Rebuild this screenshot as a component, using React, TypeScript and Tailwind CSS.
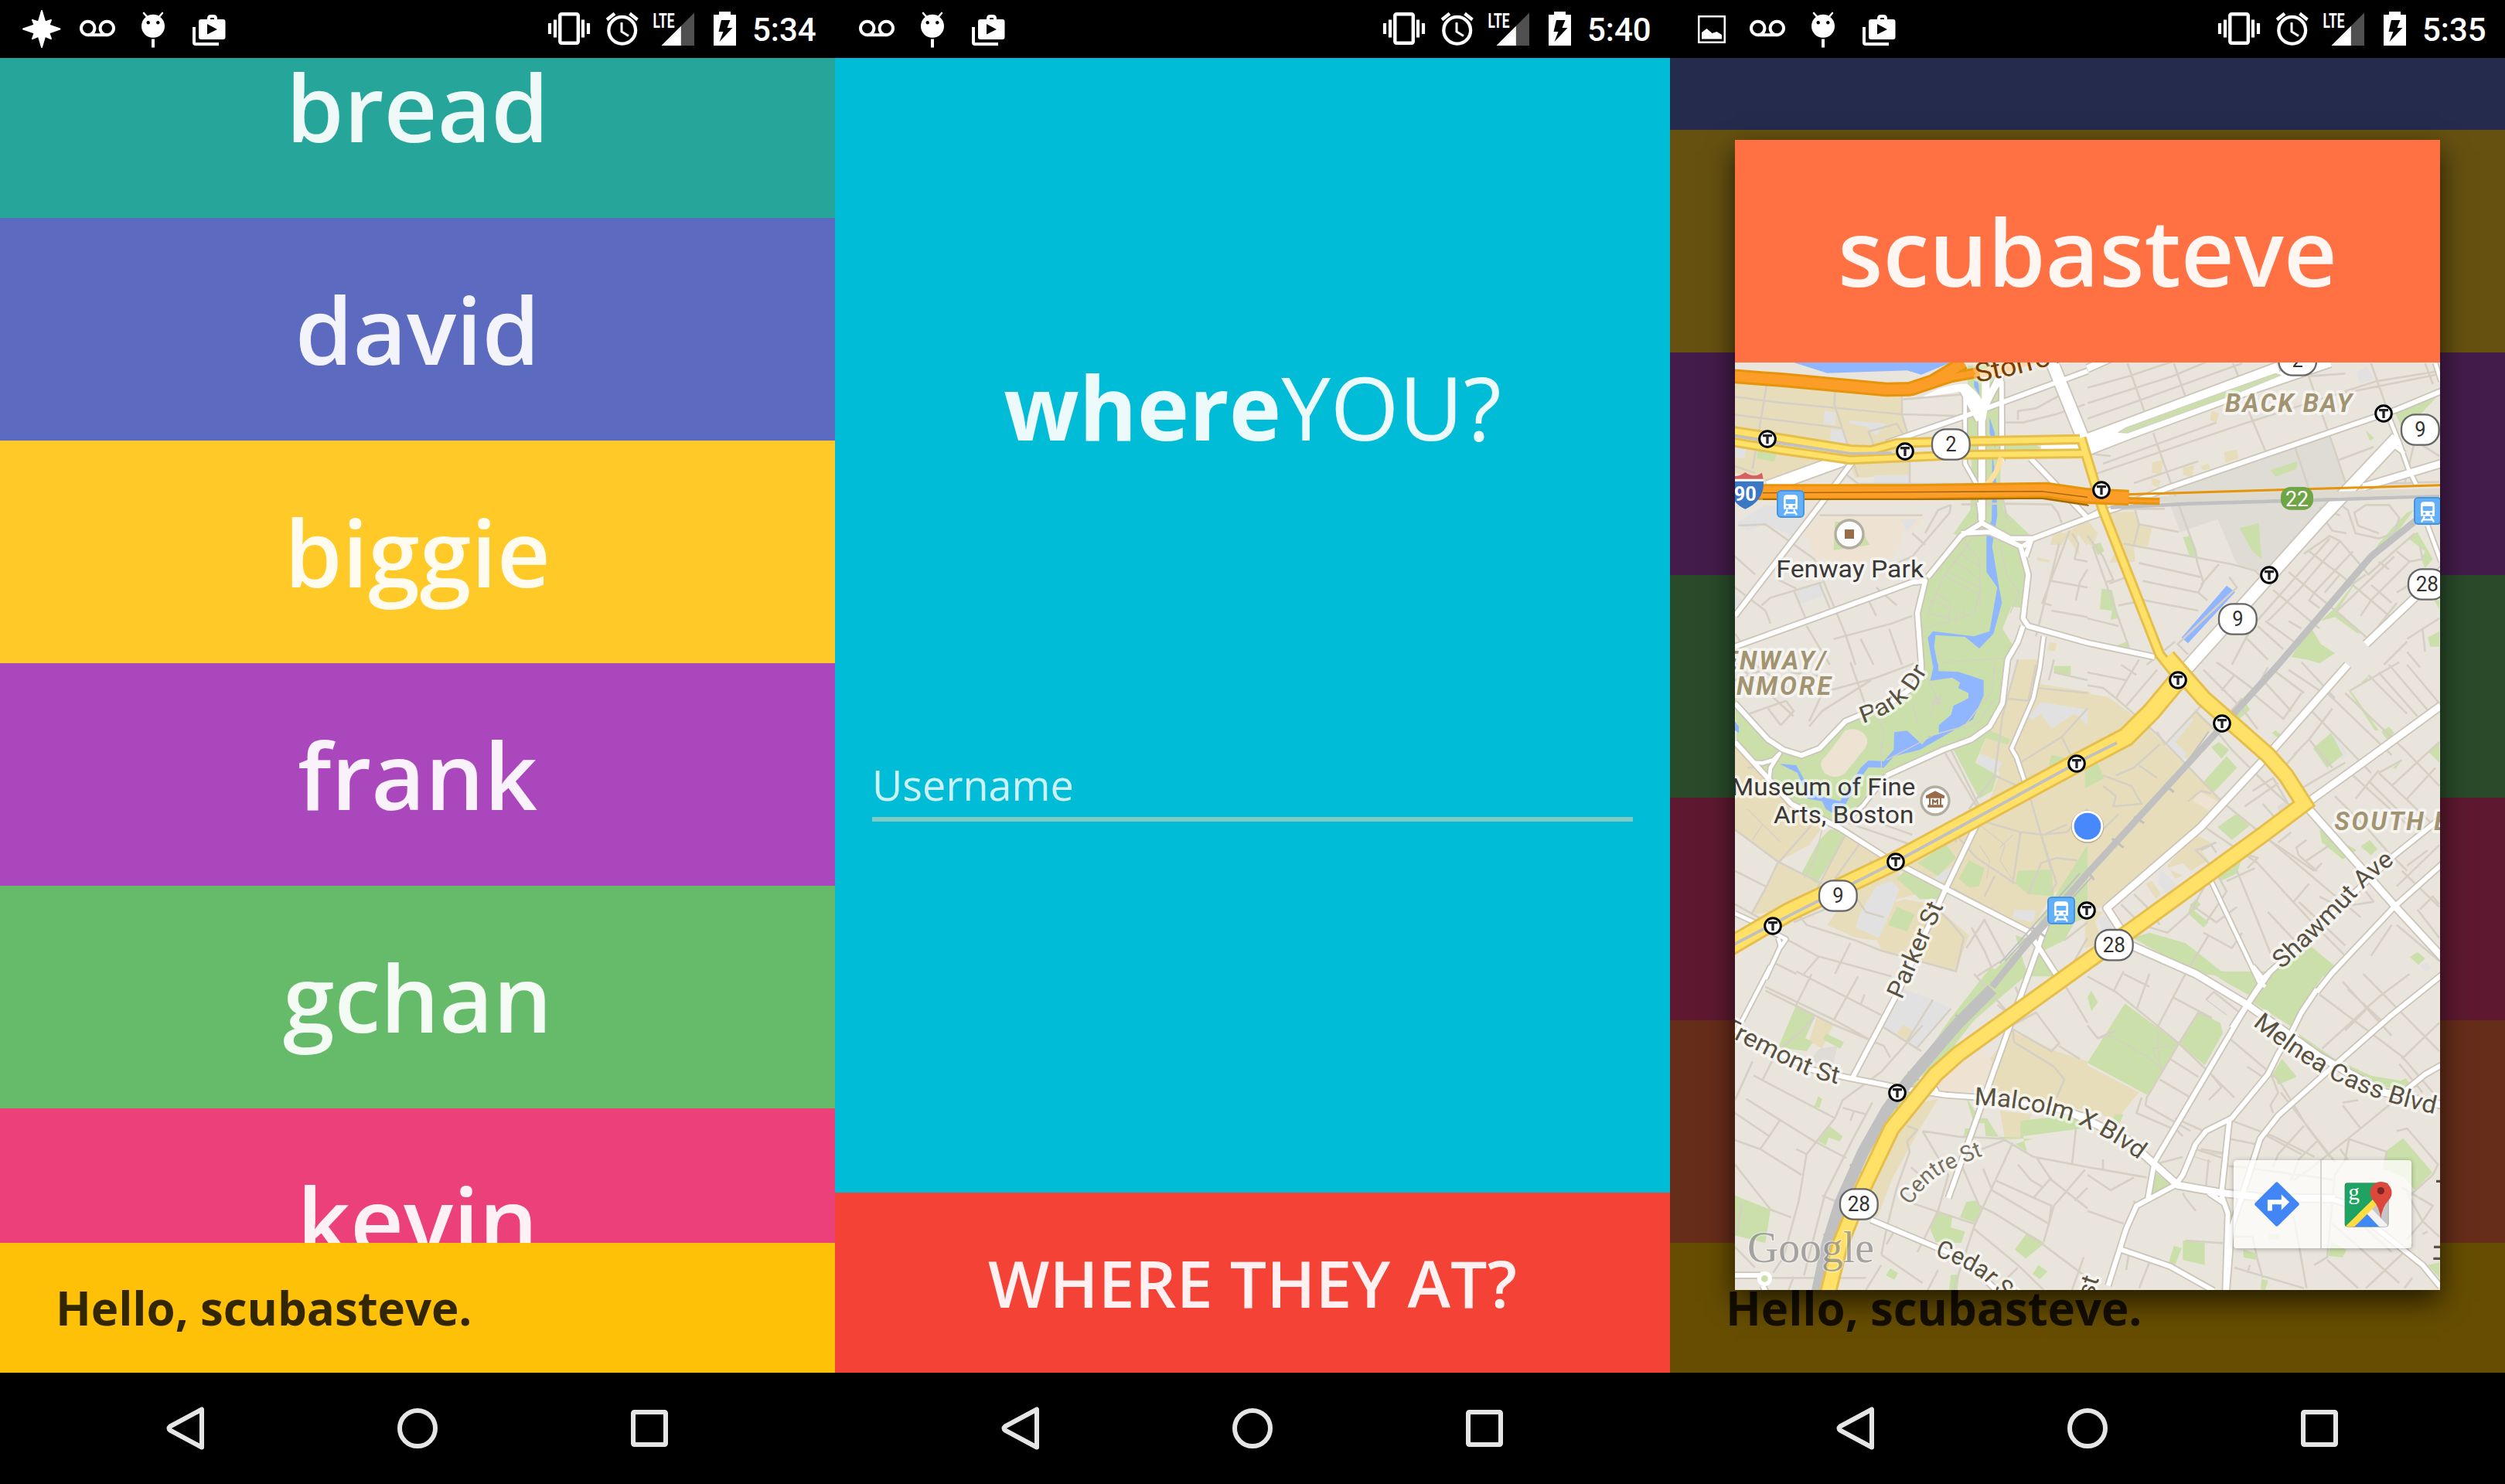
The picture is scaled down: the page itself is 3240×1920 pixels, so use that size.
import type { ReactNode } from 'react';

/* ------------------------------------------------------------------ */
/* Status bar                                                          */
/* ------------------------------------------------------------------ */

function CompassIcon() {
  return (
    <svg viewBox="18 0 72 75" className="h-[75px] w-[72px]" fill="#fff" stroke="#fff" strokeLinejoin="round" strokeWidth="2">
      <path d="M54 14 L59 31 L77.500 37.500 L59 44 L54 61 L49 44 L30 37.500 L49 31Z" />
      <path d="M42 26 L54 30 L66 26 L61.500 37.500 L66 50 L54 45 L42 50 L46.500 37.500Z" />
    </svg>
  );
}

function PictureIcon() {
  return (
    <svg viewBox="18 0 72 75" className="h-[75px] w-[72px]">
      <rect x="37.250" y="21.250" width="33.500" height="33.500" fill="none" stroke="#fff" strokeWidth="2.500" />
      <path d="M41 42 L47.500 37 L54.500 43 L60.500 41 L67 45 V50.500 H41Z" fill="#fff" />
    </svg>
  );
}

function VoicemailIcon() {
  return (
    <svg viewBox="90 0 72 75" className="h-[75px] w-[72px]" fill="none" stroke="#fff" strokeWidth="4">
      <circle cx="113.700" cy="36.500" r="8.700" />
      <circle cx="138.300" cy="36.500" r="8.700" />
      <path d="M113.700 45.200 H138.300" />
    </svg>
  );
}

function LollipopIcon() {
  return (
    <svg viewBox="162 0 72 75" className="h-[75px] w-[72px]">
      <circle cx="198" cy="33.800" r="15" fill="#fff" />
      <path d="M186 17 L190 21.500 M210 17 L206 21.500" stroke="#fff" strokeWidth="2.600" strokeLinecap="round" />
      <circle cx="191.700" cy="29.300" r="2.200" />
      <circle cx="204.300" cy="29.300" r="2.200" />
      <path d="M198 50.500 V61.500" stroke="#fff" strokeWidth="4" />
    </svg>
  );
}

function PlayStackIcon() {
  return (
    <svg viewBox="234 0 72 75" className="h-[75px] w-[72px]">
      <path d="M251 35 V55 Q251 57 253 57 H283" fill="none" stroke="#fff" strokeWidth="4" />
      <path d="M270 27 V24 Q270 21 273 21 H276 Q279 21 279 24 V27" fill="none" stroke="#fff" strokeWidth="4" />
      <rect x="257" y="25" width="34.500" height="26" rx="3" fill="#fff" />
      <path d="M268 31 L281 38 L268 44.500Z" />
    </svg>
  );
}

function VibrateIcon() {
  return (
    <svg viewBox="700 0 72 75" className="h-[75px] w-[72px]" fill="none" stroke="#fff">
      <rect x="724.300" y="18.300" width="23.500" height="37.500" rx="2" strokeWidth="4.400" />
      <path d="M711 30 V44 M718 25.500 V48.500 M754 25.500 V48.500 M761 30 V44" strokeWidth="4.200" />
    </svg>
  );
}

function AlarmIcon() {
  return (
    <svg viewBox="772 0 66 75" className="h-[75px] w-[66px]" fill="none" stroke="#fff">
      <circle cx="804.700" cy="39.300" r="17.400" strokeWidth="4.300" />
      <path d="M804 29 V41 L813 46.500" strokeWidth="3" />
      <path d="M785 25.500 L795 17.500 M814.500 17.500 L824.500 25.500" strokeWidth="4.200" />
    </svg>
  );
}

function SignalIcon() {
  return (
    <svg viewBox="838 0 68 75" className="h-[75px] w-[68px]">
      <path d="M898 16.500 V59 H855.500Z" fill="#505050" />
      <path d="M880.800 33.700 V59 H855.500Z" fill="#fff" />
      <text x="844.500" y="35.500" textLength="28" lengthAdjust="spacingAndGlyphs" fill="#fff" className="font-[Roboto,sans-serif] text-[26px] font-bold">LTE</text>
    </svg>
  );
}

function BatteryIcon() {
  return (
    <svg viewBox="906 0 68 75" className="h-[75px] w-[68px]">
      <path d="M923 19 H930 V15 H945 V19 H952 V59 H923Z" fill="#fff" />
      <path d="M933 26 L944.500 26 L940.500 36 L947.500 36 L930.500 54 L935.500 41 L929.500 41Z" />
    </svg>
  );
}

function StatusBar({ time, children }: { time: string; children: ReactNode }) {
  return (
    <header className="relative z-10 flex h-[75px] shrink-0 items-center bg-black pl-[18px]">
      {children}
      <div className="ml-auto flex w-[380px] items-center">
        <VibrateIcon />
        <AlarmIcon />
        <SignalIcon />
        <BatteryIcon />
        <span className="mt-[3px] -ml-px font-[Roboto,sans-serif] text-[42px] leading-none font-medium text-white">{time}</span>
      </div>
    </header>
  );
}

function NavBar() {
  return (
    <nav className="relative z-10 flex h-36 shrink-0 items-center justify-center gap-[200px] bg-black">
      <svg viewBox="0 0 100 100" className="size-[100px]" fill="none" stroke="#e5e5e5" strokeWidth="6" strokeLinejoin="round">
        <path d="M71 25.500 V74.500 L30 52.500 Q27 50 30 47.500Z" />
      </svg>
      <svg viewBox="0 0 100 100" className="size-[100px]" fill="none" stroke="#e5e5e5" strokeWidth="6">
        <circle cx="50" cy="50" r="23" />
      </svg>
      <svg viewBox="0 0 100 100" className="size-[100px]" fill="none" stroke="#e5e5e5" strokeWidth="6">
        <rect x="29" y="29" width="42" height="42" rx="1.500" />
      </svg>
    </nav>
  );
}

/* ------------------------------------------------------------------ */
/* Friend list                                                         */
/* ------------------------------------------------------------------ */

function Row({ name, color }: { name: string; color: string }) {
  return (
    <li className={`flex h-72 shrink-0 items-center justify-center text-[120px] leading-none font-semibold text-white/93 ${color}`}>
      <span>{name}</span>
    </li>
  );
}

function Greeting() {
  return (
    <footer className="flex h-[168px] shrink-0 items-center bg-[#ffc107] pl-[72px] text-[60px] leading-none font-bold tracking-[-0.1px] text-black/80">
      Hello, scubasteve.
    </footer>
  );
}

/* ------------------------------------------------------------------ */
/* Map                                                                 */
/* ------------------------------------------------------------------ */

type Sheet = 'A' | 'B' | 'C' | 'D' | 'E' | 'F';
type Shape = [Sheet, string];

// The map is drawn in six sheets, two across and three down.
const SHEET: Record<Sheet, string> = {
  A: 'translate(0 0)',
  B: 'translate(1380 0)',
  C: 'translate(0 1200)',
  D: 'translate(1380 1200)',
  E: 'translate(0 2400)',
  F: 'translate(1380 2400)',
};

const tan: Shape[] = [
  ['A', 'M12 105 L400 132 L660 160 L664 228 L692 330 L692 440 L690 465 L480 475 L455 420 L130 492 L12 455Z'],
  ['A', 'M1235 735 L1250 680 L1290 690 L1380 640 V740 L1340 690 L1350 780 L1300 700 L1280 735Z M1185 783 L1235 795 L1230 804 L1185 795Z M1232 1112 L1262 1118 L1252 1148 L1225 1142Z'],
  ['B', 'M80 610 L185 605 L200 660 L250 670 L235 740 L180 735 L185 800 L85 805 L130 720Z M0 640 L40 690 L20 740 L0 730Z'],
  ['B', 'M250 415 L295 405 L285 460 L250 455Z M370 435 L415 425 L405 472 L372 465Z M530 375 L580 365 L585 400 L535 418Z M440 430 L470 418 L475 440 L448 445Z M482 215 L510 225 L500 260 L475 250Z M250 475 L285 485 L275 515 L250 500Z'],
  ['C', 'M1080 110 L1110 -20 L1200 -20 L1198 75 L1390 105 L1390 820 L1240 890 L1160 1040 L1060 1000 L910 920 L830 875 L700 810 L640 800 L720 890 L640 910 L560 1070 L480 1060 L370 1010 L460 880 L620 790 L960 630 L1040 420 L960 350 L1000 250Z'],
  ['C', 'M12 310 L140 450 L210 520 L360 620 L300 700 L180 765 L12 640Z M180 770 L350 850 L150 960 L75 970Z M440 650 L600 750 L480 830 L330 870Z'],
  ['C', 'M670 910 L780 930 L920 1050 L870 1190 L580 1110 L520 960Z'],
  ['D', 'M-10 110 L80 125 L210 220 L300 310 L400 410 L520 530 L440 620 L250 790 L60 940 L-10 960Z M420 180 L490 240 L390 370 L300 310Z'],
  ['D', 'M350 730 L420 660 L480 690 L440 720 L470 760 L400 800 L370 770 L310 790 L370 820 L340 830 L310 780Z M225 850 L250 840 L285 890 L265 908Z M-10 950 L60 960 L30 1000 L60 1080 L-10 1100Z'],
  ['E', 'M1000 330 L1090 225 L1260 300 L1380 340 V530 L1230 500 L980 450 L985 370Z M1040 530 L1165 545 L1120 640 L1060 645Z'],
  ['F', 'M-10 350 L200 460 L110 570 L-10 520Z'],
  ['E', 'M690 510 L800 485 L730 600 L680 690 L620 800 L565 945 L510 930 L560 760 L640 620Z M330 165 L395 195 L350 290 L300 260Z M660 195 L705 220 L685 262 L640 235Z'],
];

const sand: Shape[] = [
  ['A', 'M280 680 L335 627 L745 627 L700 690 L680 640 L660 720 L620 780 L480 815 L325 785Z'],
  ['D', 'M410 530 L430 490 L515 535 L490 575Z M830 1165 L855 1145 L880 1175 L850 1210Z'],
  ['E', 'M800 440 L830 350 L960 290 L1010 340 L985 440 L860 470Z'],
];

const grey: Shape[] = [
  ['A', 'M360 215 L405 222 L400 270 L355 265Z M455 252 L600 265 L560 310 L520 275 L455 265Z M385 285 L430 290 L455 350 L380 340Z M12 350 L55 355 L50 400 L12 395Z M250 915 L350 882 L362 930 L260 965Z M550 465 L690 462 V500 L550 500Z M20 650 L130 580 L270 590 L280 640 L235 700 L130 655 L60 680Z M655 635 L720 635 L680 685Z M12 930 L45 950 L12 990Z'],
  ['B', 'M1040 65 L1085 45 L1110 90 L1060 110Z'],
  ['C', 'M1150 200 L1200 145 L1380 175 V235 L1330 190 L1240 250 L1200 190 L1165 215Z M965 345 L1050 380 L1020 435 L945 395Z M1095 950 L1180 955 L1170 1000 L1090 985Z M780 830 L850 785 L850 830 L800 845Z M560 860 L620 840 L650 870 L620 950 L570 1060 L480 1020 L500 960Z'],
  ['D', 'M400 200 L410 215 L340 300 L385 345 L370 370 L300 310Z M280 790 L350 860 L310 895 L275 850Z M40 980 L80 975 L95 1030 L60 1040Z M940 290 L960 275 L1010 350 L985 370Z M905 370 L940 395 L930 408Z M1290 1165 L1320 1155 L1330 1180 L1310 1190Z'],
  ['E', 'M665 60 L780 100 L850 135 L720 285 L680 260 L705 220 L665 195 L640 235 L585 205Z'],
];

const mall: Shape[] = [
  ['B', 'M310 520 L480 440 L930 300 L1000 490 L1000 510 L900 640 L700 850 L580 810 L505 635 L360 685 L325 590Z'],
  ['E', 'M340 290 L410 280 L390 360 L300 340Z'],
  ['D', 'M735 550 L765 530 L775 550 L745 572Z'],
];

const parks: Shape[] = [
  ['A', 'M915 40 L1045 30 L1042 500 L1055 600 L1160 700 L1100 735 L1150 800 L1148 900 L1130 980 L1085 975 L1050 1060 L1088 1120 L1055 1210 L740 1210 L730 1000 L755 860 L890 700 L860 692 L925 600 L930 420 L915 300Z'],
  ['A', 'M100 370 L175 375 L165 412 L97 400Z M400 645 L440 645 L510 690 L535 735 L395 755Z'],
  ['A', 'M1042 340 L1180 345 L1200 360 L1140 372 L1042 372Z'],
  ['B', 'M115 300 L150 280 L560 130 L740 65 L760 70 L570 150 L155 300Z M1190 215 L1365 150 L1290 230 L1220 280Z M590 670 L665 650 L675 790 L640 760Z M370 705 L400 700 L425 780 L395 775Z M20 735 L50 725 L65 760 L40 775Z M55 905 L95 910 L120 1020 L90 1025 L95 990 L48 985Z'],
  ['B', 'M1060 850 L970 990 L1060 1070 L1050 1080 L960 1015 L905 1030 L850 1080 L790 1170 L850 1180 L900 1195 L960 1155 L905 1120 L870 1060 L960 980Z M710 445 L815 410 L810 440 L730 470Z M1080 290 L1112 320 L1095 330Z M1200 650 L1130 730 L1060 840 L1200 690 L1265 600 L1240 610Z M1280 685 L1340 790 L1310 825 L1295 790 L1310 760 L1245 710Z M1320 1095 L1365 1070 V1130 L1330 1130Z M1340 940 L1365 950 V985Z M100 1130 L155 1110 L165 1135Z'],
  ['C', 'M740 -10 L1056 -10 L1045 150 L1010 220 L930 290 L820 325 L600 430 L500 540 L420 620 L200 520 L140 440 L20 300 L12 130 L140 290 L200 340 L270 350 L340 320 L450 210 L600 150 L700 100Z'],
  ['C', 'M990 250 L1080 290 L1070 310 L985 285 L945 380 L1030 430 L1010 490 L960 520 L860 330 L940 300Z M380 640 L460 640 L330 850 L270 810 L340 680Z M720 770 L830 695 L870 750 L800 820Z M1250 5 H1315 V40 L1250 30Z M1110 800 L1240 795 L1250 900 L1150 890 L1100 850Z M880 830 L920 760 L980 790 L960 860 L920 865Z M640 830 L690 780 L830 870 L800 910 L730 910Z M640 940 L710 970 L680 1035 L605 1010Z M1240 350 L1290 360 L1310 410 L1230 390Z M150 960 L240 935 L180 990Z'],
  ['C', 'M1380 700 L1140 1080 L990 1210 L1130 1210 L1190 1120 L1290 1070 L1330 1000 L1380 980Z M1100 1050 L1180 1075 L1250 1210 L1150 1210Z'],
  ['D', 'M-10 390 L40 385 L65 440 L-10 480Z M480 320 L510 300 L550 330 L520 365Z M445 460 L540 355 L580 400 L490 495Z M550 195 L610 140 L630 175 L590 210Z M715 265 L730 255 L755 275 L740 285Z M875 325 L945 265 L990 350 L930 400Z M1140 260 L1170 240 L1190 265 L1165 295Z M505 630 L575 580 L630 625 L560 680Z M510 815 L595 765 L580 810 L520 838Z M900 640 L930 655 L1045 720 L990 755 L910 690Z M1060 705 L1095 680 L1125 715 L1100 740Z M1365 300 L1325 340 L1365 380Z M1060 70 L1090 45 L1080 70Z M1010 95 L1025 105 L1130 255 L1115 255Z M1185 400 L1220 370 L1195 405Z M175 1060 L240 1040 L380 1080 L520 1190 L560 1210 L420 1200Z M400 930 L420 910 L440 930 L415 955 L470 1000 L450 1020 L390 965Z M870 1095 L960 1170 L930 1210 L720 1200 L760 1160Z M1250 1135 L1280 1115 L1310 1140 L1285 1165Z'],
  ['E', 'M1000 -20 L1160 -10 L940 180 L800 360 L730 400 L640 560 L500 780 L560 640 L690 400 L850 170Z M250 120 L325 160 L285 250 L315 265 L290 300 L180 285Z M365 232 L435 265 L420 290 L355 255Z M320 515 L335 475 L350 485 L340 520Z M335 650 L380 592 L430 630 L420 650 L375 635 L365 665Z M12 860 L150 915 L130 1045 L12 1015Z M910 480 L960 560 L990 560 L1040 640 L1170 640 L1100 660 L1145 690 L1130 630 L1360 600 L1370 570 L1300 550 L1120 570 L1120 635 L985 630 L980 580 L945 580 L945 630 L900 630 L905 600 L945 600Z M800 925 L855 940 L850 985 L905 1000 L890 1045 L790 1040 L768 985Z M910 885 L945 880 L970 905 L945 965 L885 945Z M1145 1005 L1215 1045 L1140 1105 L1098 1070Z M850 1168 H882 L875 1227 H843Z M1190 1130 L1225 1155 L1195 1185 L1167 1165Z M615 1142 L645 1162 L630 1187 L598 1170Z'],
  ['F', 'M145 115 L355 270 L235 472 L0 345Z M430 150 L515 190 L525 230 L455 355 L355 270Z M470 -10 L820 -10 L700 10 L680 50 L640 90 L550 40Z M700 10 L940 -30 L880 60 L800 210 L640 110Z M800 220 L960 330 L1100 395 L1215 415 L1235 405 L1250 425 L1200 450 L1000 400Z M755 330 L812 400 L740 430 L720 385Z M0 90 L15 65 L40 110 L15 145Z M262 770 L325 815 L250 855Z M335 1055 L365 1065 L340 1130 L315 1120Z M370 1035 L455 1045 V1130 L370 1110Z M605 1070 L655 1085 V1110 L605 1100Z M675 1185 L700 1190 L690 1227 L672 1225Z M945 1040 L1005 1070 L990 1100 L935 1095Z M1155 690 L1225 638 L1338 770 L1270 840 L1230 790 L1155 760Z M105 545 L140 545 L120 590 L100 570Z M1320 1130 L1365 1120 V1180Z M705 1010 H745 V1030 H705Z'],
];

const water: Shape[] = [
  ['A', 'M240 27 L370 68 L680 58 L735 74 L850 27Z'],
  ['A', 'M940 100 L955 100 L962 155 L940 120Z M1000 240 L1020 300 L1022 360 L1000 300Z'],
  ['A', 'M1010 380 L1025 480 L1030 620 L1010 740 L1030 860 L1048 960 L1015 1080 L960 1137 L905 1092 L790 1085 L785 1130 L800 1205 L780 1205 L760 1095 L780 1070 L940 1090 L1000 1070 L1030 900 L988 840 L988 680 L1008 640 L1010 560Z'],
  ['B', 'M365 1095 L540 893 L573 918 L390 1117Z'],
  ['C', 'M785 -5 H800 L802 25 L880 28 L977 60 V120 L935 212 L730 330 L630 355 L590 400 L530 398 L490 450 L440 545 L390 575 L365 560 L350 530 L295 520 L255 420 L185 385 L250 390 L310 500 L380 520 L420 530 L500 400 L530 372 L590 374 L628 330 L630 262 L680 256 L738 310 L765 278 L803 270 V235 L850 195 L860 160 L918 130 V110 L878 90 L886 70 L855 50 L770 62Z M12 220 L27 240 V265 L12 255Z'],
];

const minor: Shape[] = [
  ['A', 'M12 160 L180 182 L660 228 L905 235 M135 115 L80 440 M400 140 L398 190 L490 470 M660 160 V230 L690 330 V500 M12 230 L430 282 M430 450 L490 498 H1020 M530 295 L640 265 L680 330 M530 295 L550 345 M665 170 L905 150 M12 430 L90 455 M850 580 L845 610 L700 780 L560 840 M700 690 L750 735 M740 620 H340 M25 660 L130 655 L320 790 L440 1080 L480 1200 M750 690 L800 600 L850 580'],
  ['A', 'M12 780 L90 850 M12 900 L130 990 L150 1040 M115 970 L150 940 L350 880 M240 910 L290 1030 M340 885 L380 980 M180 870 L250 905 M530 950 L560 1010 M560 900 L640 970 M395 1100 L620 1040 L700 1010 M610 1060 L660 1200 M500 1100 L550 1200 M12 1080 L40 1120 M290 1050 L380 1200'],
  ['A', 'M1060 260 H1130 L1250 230 L1370 190 M1110 250 V215 L1180 205 L1280 150 M1060 575 L1240 578 L1265 610 L1280 650 M890 578 L1030 575 M1040 500 L1070 640 M1310 680 L1205 960 L1240 970 M1270 730 L1180 1090 M1240 875 L1380 900 M1320 690 L1345 730 L1330 790 L1380 800 M1335 950 L1350 880 L1380 830 M1240 990 L1380 1015'],
  ['B', 'M0 125 L160 80 L400 0 M0 185 L330 80 L520 0 M0 245 L200 175 L600 30 M155 30 L220 215 M335 30 L380 160 M565 30 L585 80 M855 70 L960 370 L1000 490 M1100 30 L1160 200 M610 180 L690 370 M255 300 L325 500 L420 760 L425 800 L450 880 L430 920 M0 470 L590 270 L1120 100 L1365 60 M180 495 L430 410 M60 420 L500 260 M0 380 L90 390 M865 80 L1000 70 M925 160 L1350 75 M975 405 L1110 355 M805 355 L860 520'],
  ['B', 'M90 595 H300 M200 655 L355 685 M185 600 L200 655 L180 735 M140 730 L560 810 L650 835 L680 865 M200 805 L440 860 M215 875 L430 920 L465 950 M85 885 L150 860 M0 700 L60 780 L100 870 L75 880 M20 740 L160 1130 M0 1020 L120 1050 M120 970 L220 950 L430 990 M510 810 L440 890 M340 1110 L230 1200 M550 860 L580 900 L350 1120 L390 1160'],
  ['B', 'M970 570 L1010 600 L1040 690 L1130 710 L1190 690 L1210 630 L1170 580 H1080 L1035 610 L1050 660 L1130 690 M900 590 L980 620 M1005 690 L950 680 L910 620 M1200 760 L1250 800 L1300 790 L1290 740 M1130 800 L1170 830 M840 770 L940 700 L980 720 L1090 850 L1190 760 L1270 690'],
  ['B', 'M860 760 L980 850 L1100 950 M780 840 L950 980 L1090 1100 M720 910 L900 1060 M940 710 L640 1050 L560 1200 M980 720 L820 910 L700 1030 M1030 760 L880 920 L860 950 L900 980 M1080 850 L940 950 M1190 780 L970 990 M1250 800 L1100 950 L1060 1010 M980 850 L920 920 M690 1030 L800 1110 M780 1030 L830 1060 M660 1050 L760 1140 M620 1100 L700 1180 M1090 1100 L1200 960 M1100 950 L1170 1010 M1200 920 L1280 870 M1100 890 L1180 960 M1240 1100 L1365 1020 M1240 1150 L1290 1210 M1150 1200 L1240 1110 M1300 1060 L1310 1150 M1310 30 L1340 110 M1230 500 L1270 330 L1365 390 M1260 340 L1365 260 M1010 490 L1100 500 L1365 490'],
  ['C', 'M12 60 L120 20 M460 -10 L530 190 M12 -10 L240 200 M230 30 L380 50 L300 220 M40 200 L210 140 M210 140 L240 180 L190 235 M140 170 L190 235 M300 240 L350 180 L540 60 M90 0 L230 100 M380 100 L560 50 L720 -10 M12 640 L180 765 L350 850 M180 770 L320 610 M130 870 L180 765 M130 870 L75 970 M12 800 L130 860 M330 870 L440 660 M400 830 L500 690 M500 840 L540 760 M60 400 L120 395 M410 600 L700 700 M560 610 L700 660 M820 330 L980 600 M850 330 L960 550'],
  ['C', 'M1050 130 L1150 140 L1180 0 M1110 -20 L1050 200 L1020 430 M1180 90 L1380 110 M1230 60 L1250 -20 M1250 30 L1380 60 M1020 430 L1150 490 L1240 800 M1120 380 L1280 280 L1380 170 M1280 280 L1340 400 M950 600 L1120 650 L1210 660 L1300 620 M1120 650 L1090 850 M860 650 L950 750 L1100 850 M1020 430 L920 560 M1200 660 L1260 850 L1240 880 M1380 560 L1300 650 L1200 660 M1150 890 L1200 770 L1260 750 L1340 760 M980 900 L1020 820 M870 690 L860 600 L940 600 M720 700 L850 630'],
  ['C', 'M250 960 L290 1010 L480 1070 L580 1110 L870 1190 L900 1060 L850 1000 L810 960 M220 1070 L330 1130 L620 1210 M340 1130 L280 1200 M460 1080 L400 1200 M240 1000 L360 950 M910 1100 L980 990 L1060 1140 L950 1210 M860 870 L1050 980 M930 1020 L980 1110 L1010 1180 M460 870 L520 960 L590 980 M1290 1070 L1380 1000 M1300 1200 L1380 1060 M12 930 L120 990 M170 1160 L250 1200'],
  ['D', 'M200 -20 L110 130 M0 80 L60 90 L110 130 L270 270 L520 530 L680 660 L940 880 L1060 980 M0 30 L150 60 M130 0 L190 40 M150 160 L270 20 M420 180 L520 280 L560 330 L700 470 L800 560 M270 260 L300 310 L440 160 M450 20 L600 170 L660 250 M520 100 L570 40 L500 -10 M600 130 L540 200 M570 40 L650 100 L700 10 M640 110 L760 210 L830 110 M690 70 L790 180 M720 20 L840 110 M780 20 L900 100'],
  ['D', 'M830 -10 L960 130 M870 180 L1100 420 M920 100 L1180 350 M1000 110 L1240 340 L1365 470 M1020 100 L1210 -10 M1090 40 L1240 190 M1130 30 L1280 200 M1170 0 L1340 200 M1240 0 L1365 150 M950 170 L860 290 L800 350 M860 290 L950 400 M830 480 L1000 380 M760 400 L830 320 M1030 430 L1240 620 M1090 450 L1280 640 M1130 420 L1340 620 M1130 420 L1220 370 M1180 470 L1365 300 M1240 520 L1350 400 M1040 520 L1130 410 M960 510 L1090 640 L1160 720 L1240 800'],
  ['D', 'M640 490 L720 440 L790 560 M610 550 L740 460 M680 540 L750 620 M390 530 L440 490 L480 500 M440 620 L660 770 L880 1010 L1000 1130 M630 740 L660 750 L620 790 M660 650 L880 800 L910 770 M850 680 L810 710 L820 740 L890 800 M740 690 L790 650 M940 700 L850 760 M500 690 L420 720 L490 790 M440 720 L480 700 L500 730 M580 800 L650 970 L710 1120 M860 850 L800 920 M820 920 L1000 1090 M700 960 L850 1120 M900 900 L980 940 L1110 920 L1080 880 M1180 1010 L1100 1130 M1200 1010 L1365 1150'],
  ['D', 'M130 930 L210 1010 L310 1040 L400 960 L470 830 M180 890 L250 960 L280 1010 M400 930 L500 1000 L580 940 M490 790 L540 880 L460 1000 M450 1040 L560 1100 L600 1040 M470 1050 L380 1200 M540 840 L650 790 M1290 950 L1340 900 L1365 930 M1280 950 L1365 1060 M1365 700 L1200 860 M1220 800 L1365 940 M1240 780 L1320 720 M60 470 L110 510 L100 550 L210 540 L170 470 L60 430 M110 430 L180 400 L280 310 M200 390 L270 440 M60 640 L120 580'],
  ['E', 'M130 50 L400 180 L560 270 M130 65 L390 195 L590 280 L615 325 M250 120 L310 0 M250 -10 L580 160 M395 180 L490 10 M585 205 L735 300 M500 120 L515 80 M680 260 L780 100 M720 285 L850 135 M190 290 L250 240 L320 170 M120 410 L180 290 M12 490 L80 340 M85 395 L400 560 L430 490 L580 380 L740 200 M520 545 L430 520 M460 570 L475 530 M55 485 L320 650 L445 715 M545 500 L470 640 L360 860 L280 1170 M400 560 L290 700 L260 880 L200 1100 L160 1160 M250 680 L290 700 M350 860 L420 890 M12 540 L145 630 L110 680 M145 630 L185 570 M12 645 L110 680 L270 780 M12 740 L150 915 L230 945 M20 1000 L40 890 M20 1180 H520 M220 1227 L240 1175 M12 1060 L90 1140'],
  ['E', 'M740 610 L840 780 L800 920 L720 1080 M740 610 L880 632 L1060 640 M680 590 L720 605 L680 650 L690 690 L640 830 L600 990 L580 1090 M1060 645 L970 680 M1090 655 L940 980 L860 1227 M1060 645 L1170 710 L1380 750 M1335 600 L1320 740 M890 740 L960 900 L1020 930 L1180 1030 L1380 1180 M975 755 L1010 840 L1230 970 L1240 900 L1020 800 M1180 710 L1240 800 L1380 910 M1110 740 L1160 800 L1210 830 M1240 790 L1170 870 M1370 760 L1250 900 L1210 1040 M700 890 L940 970 M580 1090 L740 1200 M580 1130 L520 1227 M760 1227 L800 1150 M600 1050 L640 980 M695 750 L740 790 M1320 1227 L1365 1100 M1110 1130 L1210 1227 M1110 1140 L1020 1227 M940 990 L1110 1130 M1330 880 L1380 830'],
  ['E', 'M1030 120 L1080 160 L940 0 M1050 220 L1180 150 L1270 270 L1240 300 L1090 215 L1095 265 L1250 360 M1270 280 L1350 330 M1290 40 L1380 190 M1100 50 L1120 100 M1250 360 L1290 410 L1260 480'],
  ['F', 'M0 10 L110 70 L355 270 L480 390 L570 480 M140 -10 L100 70 M240 0 L190 140 M140 0 L240 50 M380 0 L270 210 M330 90 L480 170 L430 150 M0 200 L40 250 L110 220 M355 270 L230 480 L225 510 L400 610 M430 150 L355 270 M320 330 L430 400 M280 410 L400 480 M210 480 L190 540 L350 610 L370 630 M340 560 L450 610 M470 490 L520 440 L480 390 M460 100 L490 70 L590 150 M550 250 L740 410 L850 590 L940 710 M620 360 L680 400 M440 680 L550 700 M710 385 L740 460 L710 510 L720 540 M750 460 L860 600 L960 730 M560 570 L720 630 L880 710'],
  ['F', 'M900 80 L1220 320 L1340 460 M990 30 L1180 240 M910 290 L1130 90 L1250 0 M1070 0 L1365 300 M1220 330 L1365 190 M1210 350 L1300 460 M1150 190 L1010 60 M1080 140 L1000 220 M990 500 L1050 490 M990 510 L1060 600 L860 760 L800 800 M1060 600 L1290 410 M1010 640 L1160 690 L1150 760 M1015 640 L1000 720 L960 780 L930 1100 L880 1130 M980 680 L1010 720 M1200 610 L1240 600 L1360 740 L1340 780 L1240 870 M550 640 L650 660 M530 745 L600 750 L960 800 M680 620 L830 700 M890 650 L820 720 L790 800 M840 590 L740 700 L720 750 M260 740 L370 710 M420 680 L540 720 M470 720 L460 820'],
  ['F', 'M0 750 L60 760 L230 790 M60 760 V720 M0 780 L90 840 L180 790 M0 920 L140 970 M160 1090 L150 1150 M370 850 L380 870 L420 920 M240 1120 L200 1220 M380 1035 L525 1045 M570 1140 L840 1220 M570 1020 H640 L660 1110 L680 1180 M620 1160 L630 1130 M800 940 L850 1220 M950 970 L1210 1200 M930 1110 L1050 1220 M1080 1220 L1260 1050 M1050 960 L1180 1080 M1220 830 L1340 900 L1300 960 L1365 1020 M1240 850 L1300 960 L1240 1030 M1300 1010 L1320 1000 M1230 1220 L1260 1180 M180 880 L190 900'],
];

const fine: Shape[] = [
  ['A', 'M890 710 L960 790 L965 980 M820 850 L960 930 M840 840 L960 900 M870 800 L960 870 M890 770 L960 820 M790 920 L850 960 L840 1040 M770 950 L850 980 M760 1000 L850 1020 M750 1060 L940 1000 L965 900 M870 1040 V990 M900 1020 V980 M760 1000 L820 860 L940 700 M1040 740 L1070 860 L1115 920 L1080 1000 M820 1190 L1060 1175'],
  ['C', 'M770 200 L790 120 L760 50 M700 150 L720 230 M580 340 L590 260 L560 190 M580 300 V400 M600 370 L790 270 L900 240 L1010 100 L1020 0 M790 120 L815 150 H775 L810 120 L800 160Z M900 250 L960 220 L1020 130'],
  ['C', 'M960 620 L1060 700 L1040 760 L1100 850 M1040 710 L1090 660 M960 700 L1000 760 L990 830 M350 640 L320 760 L280 830 M60 560 L120 620 L80 680 M120 620 L190 690'],
  ['F', 'M50 250 L90 240 L230 320 L290 370 L250 290 L350 275 M270 220 L280 360 M460 100 L540 160 M440 690 L520 700 M415 710 L480 730'],
];

// White streets, grouped by line width.
const streets: { width: number; shapes: Shape[] }[] = [
  {
    width: 14,
    shapes: [
      ['A', 'M905 150 V420 L950 500 M1045 90 V330 M1048 100 L1050 410'],
      ['A', 'M1210 1090 L1195 1210 L1170 1330 L1085 1525 L1105 1560 L1140 1665'],
      ['B', 'M1170 240 L1210 340 L1245 440 L1275 500 M1190 350 L1230 380 M1350 30 L1372 100 M1320 660 L1372 800'],
      ['C', 'M80 380 L120 382 L160 370 L185 345 L150 400 L145 440 M390 620 L450 600 L510 545 L600 430'],
      ['C', 'M12 965 L120 1015 M160 1040 L210 1065 L190 1095 L180 1060 M190 1090 L130 1220'],
      ['D', 'M475 830 L665 1230 L690 1250'],
      ['E', 'M150 -30 L20 220 M780 430 L800 465'],
    ],
  },
  {
    width: 18,
    shapes: [
      ['A', 'M470 410 L350 570 L12 1010 M600 340 L905 235 L1380 60'],
      ['A', 'M12 1130 L290 1030 L700 880 L750 875 L720 1000 L735 1200 L735 1260 M760 860 L890 700 L970 650 L960 570 M890 690 L1000 685 L1120 740 L1150 850 L1130 1020 L1150 1050 L1380 1115 L1640 1170 M970 650 L1080 710 L1170 710 L1380 630 M1130 740 L1160 720 L1140 780'],
      ['A', 'M1130 1050 L1110 1110 L1070 1180 L1050 1350 L1000 1440 L930 1490 L820 1530 L600 1630'],
      ['C', 'M12 150 L140 290 L200 330 L270 352 L340 325 L440 220 L620 145 L700 90 L740 20 M12 300 L130 430 L230 540 L420 635 L600 750 L830 870 L1150 1035 L1270 1220'],
      ['B', 'M-220 400 L0 630 L120 590 L310 515 L1200 210 L1380 135 M0 630 L60 600'],
      ['D', 'M1365 600 L1190 740 L690 1210 L560 1410 M1380 770 L1190 940 L950 1195 L890 1270'],
      ['E', 'M1230 -220 L840 870 M950 -580 L830 -330 L650 60 L470 400 M12 220 L300 370 L460 405 L640 440 L830 470 L940 478 L1200 510 L1400 560 M540 955 L790 1060 L900 1110 L1040 1240 M12 1170 H110 M120 1210 L135 1240'],
      ['F', 'M710 -10 L620 120 L260 730 L235 870 M890 60 L830 150 L790 230 L740 310 L700 390 L560 560 L460 610 L420 660 L370 780 L340 820 L190 900 L150 990 L80 1210 M550 570 L520 850 M130 1070 L320 1135 L490 1230 M640 -30 L680 20'],
      ['F', 'M1380 0 L1180 160 L930 380 L740 550 L670 640 L600 860 L560 980 L540 1230 M520 860 L545 930 L535 1230 M470 850 L530 890 M930 870 L1000 890 L1300 1130 L1370 1215 M1380 350 L1310 390 L1200 480'],
    ],
  },
  {
    width: 26,
    shapes: [
      ['A', 'M970 640 V200 M890 120 L960 250 M1060 40 L980 200'],
      ['B', 'M1080 1120 L1280 930 L1380 830'],
      ['D', 'M1010 0 L710 340 L440 630 L75 945 L130 1030'],
      ['D', 'M1370 160 L1000 430 L860 530 M850 550 L1200 945 L1380 1140'],
      ['B', 'M0 50 L90 10 M1070 510 L1370 420'],
      ['D', 'M170 1090 L420 1200 L620 1320 L900 1520 L1150 1660 L1380 1710'],
      ['F', 'M-60 540 L150 640 L350 820 L520 850 L700 870 L960 872'],
    ],
  },
  {
    width: 46,
    shapes: [
      ['A', 'M140 510 L430 405 M1240 20 L1370 340 M1200 365 H1370'],
      ['B', 'M-20 335 L740 50 M-20 370 L160 300 L620 130 L940 20'],
      ['B', 'M1200 320 L900 640 L380 1220'],
    ],
  },
];

const rails: { width: number; shape: Shape }[] = [
  { width: 26, shape: ['B', 'M1300 620 L1100 780 L740 1200 L540 1420 L0 2010 L-200 2240 L-370 2450'] },
  { width: 46, shape: ['E', 'M1010 60 L880 190 L690 410 L600 530 L510 690 L420 890 L370 1050 L330 1240'] },
  { width: 14, shape: ['B', 'M90 590 L400 575 L900 560 L1365 545'] },
];

const yellow: { width: number; shape: Shape }[] = [
  { width: 30, shape: ['A', 'M0 292 L180 320 L460 365 L540 368 L640 340 L800 335 L1350 325'] },
  { width: 28, shape: ['A', 'M0 335 L200 368 L460 405 L900 385 L1370 380'] },
  { width: 32, shape: ['A', 'M1355 320 L1440 600 L1660 1160 L1740 1260'] },
  { width: 58, shape: ['D', 'M310 -30 L450 130 L700 350 L770 430 L840 540 L680 660 L170 1030 L-40 1180 L-500 1510 L-590 1590 L-760 1800 L-870 2030 L-960 2250 L-1010 2450'] },
  { width: 68, shape: ['D', 'M350 60 L250 180 L150 280 L-20 370 L-750 765 L-1160 960 L-1400 1100'] },
];

const motorway: { width: number; d: string }[] = [
  { width: 46, d: 'M0 80 L200 95 L600 132 L690 130 L780 100 L900 27' },
  { width: 32, d: 'M600 135 L700 135 L850 85 L960 65' },
  { width: 52, d: 'M100 530 L700 530 L1220 522 L1380 545 L1540 552' },
  { width: 18, d: 'M1380 560 L1660 566' },
];

const stations: [number, number][] = [
  [138, 324], [672, 372], [2529, 225], [1434, 522], [2085, 852], [1731, 1260], [1902, 1428],
  [1338, 1584], [636, 1965], [159, 2214], [1377, 2154], [642, 2862],
];

const shields: [number, number, string][] = [
  [850, 345, '2'], [2195, 18, '2'], [2671, 288, '9'], [1963, 1023, '9'], [2698, 888, '28'],
  [412, 2097, '9'], [1483, 2288, '28'], [493, 3294, '28'],
];

const trains: [number, number][] = [[228, 576], [2700, 603], [1278, 2154]];

function Shapes({ shapes }: { shapes: Shape[] }) {
  return (
    <>
      {shapes.map(([sheet, d], i) => (
        <path key={i} d={d} transform={SHEET[sheet]} />
      ))}
    </>
  );
}

function Train({ x, y }: { x: number; y: number }) {
  return (
    <g transform={`translate(${x} ${y})`}>
      <rect x="-51" y="-51" width="102" height="102" rx="14" fill="#62b0fb" stroke="#4a93d6" strokeWidth="6" />
      <path d="M-27 -22 Q-27 -35 -14 -35 H14 Q27 -35 27 -22 V20 H-27Z" fill="#fff" />
      <path d="M-19 -18 H19 V0 H-19Z M-18 7 H-8 V14 H-18Z M8 7 H18 V14 H8Z" fill="#62b0fb" />
      <path d="M-12 22 L-24 43 M12 22 L24 43 M-18 34 H18" stroke="#fff" strokeWidth="7" />
    </g>
  );
}

function StreetLabel({ id, d, length, children }: { id: string; d: string; length: number; children: string }) {
  return (
    <>
      <path id={id} d={d} fill="none" stroke="none" />
      <text>
        <textPath href={`#${id}`} textLength={length} lengthAdjust="spacingAndGlyphs">{children}</textPath>
      </text>
    </>
  );
}

function StreetMap() {
  return (
    <svg viewBox="12 27 2736 3600" className="block h-[1200px] w-[912px] bg-[#e9e5dc]" strokeLinejoin="round">
      <g fill="#e8ddbb"><Shapes shapes={tan} /></g>
      <g fill="#eee3d2"><Shapes shapes={sand} /></g>
      <g fill="#e1e1e1"><Shapes shapes={grey} /></g>
      <g fill="#dfdbd5"><Shapes shapes={mall} /></g>
      <g fill="#cadfaa"><Shapes shapes={parks} /></g>
      <path d="M365 1555 Q330 1580 360 1620 Q400 1650 440 1620 L520 1520 Q535 1490 510 1465 Q480 1440 440 1455Z" fill="#eee3d2" />
      <g fill="#8fb6ff"><Shapes shapes={water} /></g>
      <g fill="none" stroke="#d6d0c4" strokeWidth="8"><Shapes shapes={minor} /></g>
      <g fill="none" stroke="#d6d0c4" strokeWidth="4"><Shapes shapes={fine} /></g>
      {streets.map(({ width, shapes }) => (
        <g key={width} fill="none" stroke="#cdc5b9" strokeWidth={width + 11}><Shapes shapes={shapes} /></g>
      ))}
      {streets.map(({ width, shapes }) => (
        <g key={width} fill="none" stroke="#fff" strokeWidth={width}><Shapes shapes={shapes} /></g>
      ))}
      <path d="M740 160 Q830 150 880 140 L905 150 Q935 190 955 250 L985 250 Q990 190 1030 130 L1045 110 L1030 95 L1000 130 V80 H970 V170 Q950 140 915 112 Q880 105 800 130Z" fill="#fff" />
      <circle cx="127" cy="3583" r="21" fill="#cadfaa" stroke="#fff" strokeWidth="16" />
      <path d="M1500 298 L1530 280 L1940 130 L2110 70 L2130 76 L1950 150 L1535 300Z" fill="#cadfaa" stroke="#d6d0c4" strokeWidth="4" />
      <g fill="none" stroke="#c0c0c0">
        {rails.map(({ width, shape }, i) => (
          <path key={i} d={shape[1]} transform={SHEET[shape[0]]} strokeWidth={width} />
        ))}
        <path d="M1680 1665 L1715 1695 M1560 1790 L1600 1815 M1475 1875 L1520 1910 M1380 2000 L1405 2035 M1165 2220 L1215 2255 M868 2560 L908 2588 M683 2780 L725 2812 M600 2890 L650 2926 M458 3140 L510 3176 M355 3412 L400 3420" strokeWidth="9" />
        <path d="M1380 2010 L1060 2350 M1400 2020 L1080 2370 M1350 2010 L1040 2360 M1850 1460 L1765 1580 L1600 1760" strokeWidth="6" />
      </g>
      <g fill="none" strokeLinejoin="miter">
        {yellow.map(({ width, shape }, i) => (
          <path key={i} d={shape[1]} transform={SHEET[shape[0]]} strokeWidth={width + 10} stroke="#e6be4b" />
        ))}
        {yellow.map(({ width, shape }, i) => (
          <path key={i} d={shape[1]} transform={SHEET[shape[0]]} strokeWidth={width - 8} stroke="#ffe168" />
        ))}
        <path d="M1494 1503 L1360 1570 L636 1965 L220 2175 L0 2290" stroke="#c0c0c0" strokeWidth="12" />
        <path d="M0 310 L200 342 L460 380 L620 378" stroke="#c0c0c0" strokeWidth="10" />
        <path d="M1045 395 Q1030 460 990 500" stroke="#ffdf9a" strokeWidth="20" />
      </g>
      <path d="M1500 552 L2760 515 L2760 540 L1660 570Z" fill="#dedad0" />
      <path d="M1500 540 L2100 522 L2760 503" fill="none" stroke="#e69409" strokeWidth="9" />
      <path d="M940 60 L1080 27 H1180 L1060 70 L950 90Z" fill="#ffd097" />
      <g fill="none">
        <path d="M100 556 H700 L1220 552 L1380 575" stroke="#9c6200" strokeWidth="10" />
        {motorway.map(({ width, d }, i) => (
          <path key={i} d={d} strokeWidth={width + 10} stroke="#e69409" />
        ))}
        {motorway.map(({ width, d }, i) => (
          <path key={i} d={d} strokeWidth={width - 8} stroke="#fb9d26" />
        ))}
        <path d="M120 533 L700 530 L1200 527 L1380 550" stroke="#9c6200" strokeWidth="4" />
        <path d="M120 558 H700 L1200 554 L1385 582" stroke="#a86a05" strokeWidth="6" />
      </g>

      {/* Interstate shield */}
      <path d="M-20 478 H122 Q132 560 52 596 Q-10 570 -20 478Z" fill="#3a78c6" />
      <path d="M-20 478 L-10 462 Q20 478 52 453 Q85 478 117 455 L122 480 H-20Z" fill="#d65f62" />
      <path d="M-20 484 H123" stroke="#fff" strokeWidth="9" />

      <g className="font-[Roboto,sans-serif]">
        <text x="8" y="563" textLength="87" lengthAdjust="spacingAndGlyphs" fill="#fff" className="text-[80px] font-bold">90</text>
        {trains.map(([x, y], i) => <Train key={i} x={x} y={y} />)}
        {stations.map(([x, y], i) => (
          <g key={i}>
            <circle cx={x} cy={y} r="31" fill="#fff" stroke="#000" strokeWidth="9" />
            <path d={`M${x - 18} ${y - 13} H${x + 18} M${x} ${y - 13} V${y + 18}`} stroke="#222" strokeWidth="10" />
          </g>
        ))}
        {shields.map(([x, y, label], i) => (
          <g key={i} textAnchor="middle">
            <rect x={x - 73} y={y - 59} width="146" height="118" rx="54" fill="#fff" stroke="#666" strokeWidth="7" />
            <text x={x} y={y + 28} fill="#333" className="text-[82px]" textLength={label.length > 1 ? 88 : 43} lengthAdjust="spacingAndGlyphs">{label}</text>
          </g>
        ))}
        <rect x="2130" y="510" width="126" height="89" rx="38" fill="#6fa544" />
        <text x="2193" y="584" textAnchor="middle" textLength="90" lengthAdjust="spacingAndGlyphs" fill="#fff" className="text-[82px]">22</text>

        {/* Places */}
        <g stroke="#fff" strokeOpacity="0.62" strokeWidth="22" strokeLinejoin="round" paintOrder="stroke">
          <g fill="#3b3838" className="text-[96px]">
            <text x="172" y="861" textLength="572" lengthAdjust="spacingAndGlyphs">Fenway Park</text>
            <text x="-2" y="1708" textLength="714" lengthAdjust="spacingAndGlyphs">Museum of Fine</text>
            <text x="162" y="1815" textLength="544" lengthAdjust="spacingAndGlyphs">Arts, Boston</text>
          </g>
          <g fill="#a39471" className="text-[98px] font-bold italic">
            <text x="1914" y="220" textLength="492" lengthAdjust="spacing">BACK BAY</text>
            <text x="-32" y="1218" textLength="396" lengthAdjust="spacing">ENWAY/</text>
            <text x="18" y="1317" textLength="366" lengthAdjust="spacing">NMORE</text>
            <text x="2338" y="1842" textLength="440" lengthAdjust="spacing">SOUTH E</text>
          </g>
          <g fill="#5a5240" className="text-[96px]">
            <g className="text-[90px]">
              <StreetLabel id="park-dr" d="M508 1428 Q640 1385 705 1305 Q735 1265 775 1195" length={335}>Park Dr</StreetLabel>
            </g>
            <StreetLabel id="parker" d="M659 2502 L824 2132" length={400}>Parker St</StreetLabel>
            <StreetLabel id="shawmut" d="M2133 2383 Q2290 2245 2430 2092 Q2500 2015 2590 1958" length={605}>Shawmut Ave</StreetLabel>
            <StreetLabel id="tremont" d="M-45 2625 Q100 2700 230 2765 Q320 2810 414 2828" length={500}>Tremont St</StreetLabel>
            <StreetLabel id="malcolm" d="M940 2908 Q1130 2915 1300 2967 Q1450 3020 1600 3138" length={686}>Malcolm X Blvd</StreetLabel>
            <StreetLabel id="melnea" d="M2020 2598 Q2155 2710 2285 2785 Q2475 2890 2730 2944" length={796}>Melnea Cass Blvd</StreetLabel>
            <StreetLabel id="cedar" d="M786 3495 Q900 3530 985 3595 L1090 3700" length={350}>Cedar St</StreetLabel>
            <text transform="translate(1400 3660) rotate(-72)">st</text>
          </g>
          <g fill="#77705e" className="text-[88px]">
            <StreetLabel id="centre" d="M692 3300 Q775 3180 860 3155 Q920 3125 975 3106" length={350}>Centre St</StreetLabel>
          </g>
          <g fill="#7a3d00" strokeOpacity="0.3" className="text-[104px]">
            <StreetLabel id="storrow" d="M950 104 Q1100 80 1300 18" length={385}>Storrow</StreetLabel>
          </g>
        </g>
        <path d="M2733 3205 H2748 M2724 3460 H2748 M2722 3505 H2748" stroke="#5a5240" strokeWidth="10" />
      </g>

      {/* Landmark pins */}
      <circle cx="456" cy="693" r="54" fill="#fff" stroke="#b1aea0" strokeWidth="10" />
      <rect x="438" y="675" width="36" height="36" fill="#986b4a" />
      <circle cx="789" cy="1728" r="54" fill="#fff" stroke="#b1aea0" strokeWidth="10" />
      <path d="M753 1718 V1708 L789 1690 L825 1708 V1718Z M760 1744 H820 V1754 H760Z" fill="#986b4a" />
      <path d="M768 1715 V1748 M810 1715 V1748" stroke="#986b4a" strokeWidth="6" />
      <path d="M780 1742 V1724 L789 1734 L798 1724 V1742" fill="none" stroke="#986b4a" strokeWidth="6" />

      {/* Current position */}
      <circle cx="1380" cy="1829" r="64" fill="#000" opacity="0.2" />
      <circle cx="1380" cy="1827" r="61" fill="#fff" />
      <circle cx="1380" cy="1827" r="52" fill="#4788fd" />

      <text x="60" y="3520" textLength="492" lengthAdjust="spacingAndGlyphs" fill="#7d7d7d" fillOpacity="0.65" stroke="#fff" strokeOpacity="0.4" strokeWidth="8" paintOrder="stroke" className="font-['Liberation_Serif',serif] text-[174px]">Google</text>
    </svg>
  );
}

function MapActions() {
  return (
    <div className="absolute top-[1320px] left-[645px] flex h-[114px] w-[230px] divide-x-2 divide-[#d5d3cf] rounded-sm bg-white/75 shadow-[0_1px_6px_rgba(0,0,0,0.3)]">
      <div className="flex flex-1 items-center justify-center">
        <svg viewBox="651 809 175 175" className="size-[58px]">
          <path d="M734 811 Q738 808 742 811 L824 892 Q827 896 824 900 L742 982 Q738 985 734 982 L653 900 Q650 896 653 892Z" fill="#4285f4" />
          <path d="M711 922 V888 H765" fill="none" stroke="#fff" strokeWidth="18" />
          <path d="M756 858 L787 888 L756 919Z" fill="#fff" />
        </svg>
      </div>
      <div className="flex flex-1 items-center justify-center pl-1">
        <svg viewBox="1000 798 192 192" className="size-16">
          <defs>
            <clipPath id="app-tile"><rect x="1005" y="811" width="170" height="171" rx="12" /></clipPath>
          </defs>
          <g clipPath="url(#app-tile)">
            <rect x="1005" y="811" width="170" height="171" fill="#1ea362" />
            <path d="M1175 811 V982 L1090 910Z" fill="#c6c6c6" />
            <path d="M1090 928 L1145 985 H1035Z" fill="#4189f2" />
            <path d="M1090 930 L1110 912 L1178 982 L1142 985Z" fill="#f2f2f2" />
            <path d="M1002 986 L1120 870 L1130 895 L1038 986Z" fill="#ffdc3f" />
          </g>
          <rect x="1005" y="811" width="170" height="171" rx="12" fill="none" stroke="#000" strokeOpacity="0.3" strokeWidth="2" />
          <text x="1019" y="876" fill="#fff" className="font-['Liberation_Serif',serif] text-[88px]">g</text>
          <path d="M1145 950 Q1140 905 1115 878 A42 42 0 1 1 1176 878 Q1150 905 1145 950Z" fill="#dc483c" />
          <circle cx="1145" cy="842" r="14" fill="#7a2724" />
        </svg>
      </div>
    </div>
  );
}

/* ------------------------------------------------------------------ */
/* Screens                                                             */
/* ------------------------------------------------------------------ */

function Phone({ children }: { children: ReactNode }) {
  return <section className="flex h-[1920px] w-[1080px] shrink-0 flex-col overflow-hidden">{children}</section>;
}

export default function App() {
  return (
    <main className="flex h-[1920px] w-[3240px] overflow-hidden bg-black font-['Open_Sans',sans-serif]">
      <Phone>
        <StatusBar time="5:34">
          <CompassIcon />
          <VoicemailIcon />
          <LollipopIcon />
          <PlayStackIcon />
        </StatusBar>
        <div className="min-h-0 flex-1 overflow-hidden">
          <ul className="-mt-[81px] flex flex-col">
            <Row name="bread" color="bg-[#26a69a]" />
            <Row name="david" color="bg-[#5c6bc0]" />
            <Row name="biggie" color="bg-[#ffca28]" />
            <Row name="frank" color="bg-[#ab47bc]" />
            <Row name="gchan" color="bg-[#66bb6a]" />
            <Row name="kevin" color="bg-[#ec407a]" />
          </ul>
        </div>
        <Greeting />
        <NavBar />
      </Phone>

      <Phone>
        <StatusBar time="5:40">
          <VoicemailIcon />
          <LollipopIcon />
          <PlayStackIcon />
        </StatusBar>
        <div className="flex flex-1 flex-col bg-[#00bcd7] px-12">
          <h1 className="mt-[373px] text-center text-[114px] leading-[156px] text-white/93">
            <span className="font-bold">where</span>YOU?
          </h1>
          <label className="mt-[374px] block h-[85px] border-b-6 border-[#80cbc4] text-[54px] leading-[74px] text-white/80">Username</label>
        </div>
        <button className="flex h-[233px] shrink-0 items-center justify-center bg-[#f44336] text-[84px] leading-none font-semibold tracking-[0.15px] text-white/93">
          WHERE THEY AT?
        </button>
        <NavBar />
      </Phone>

      <Phone>
        <StatusBar time="5:35">
          <PictureIcon />
          <VoicemailIcon />
          <LollipopIcon />
          <PlayStackIcon />
        </StatusBar>
        <div className="relative flex min-h-0 flex-1 flex-col">
          <div className="min-h-0 flex-1 overflow-hidden">
            <ul className="-mt-[195px] flex flex-col">
              <Row name="david" color="bg-[#5c6bc0]" />
              <Row name="biggie" color="bg-[#ffca28]" />
              <Row name="frank" color="bg-[#ab47bc]" />
              <Row name="gchan" color="bg-[#66bb6a]" />
              <Row name="kevin" color="bg-[#ec407a]" />
              <Row name="scubasteve" color="bg-[#ff7043]" />
            </ul>
          </div>
          <Greeting />
          <div className="absolute inset-0 flex items-start justify-center bg-black/60 pt-[106px]">
            <article className="relative h-[1488px] w-[912px] overflow-hidden shadow-[0_14px_34px_rgba(0,0,0,0.65)]">
              <h2 className="flex h-72 items-center justify-center bg-[#ff7043] text-[120px] leading-none font-semibold tracking-[-0.1px] text-white/93">
                scubasteve
              </h2>
              <StreetMap />
              <MapActions />
            </article>
          </div>
        </div>
        <NavBar />
      </Phone>
    </main>
  );
}
